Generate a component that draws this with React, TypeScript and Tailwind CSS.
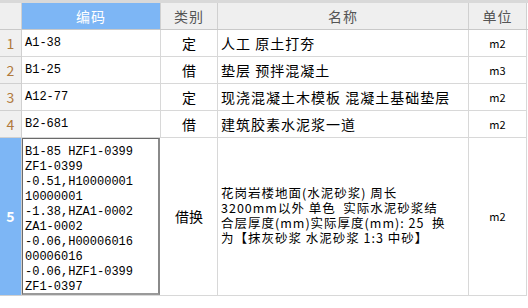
import React from "react";

const cjk = { fontFamily: '"Noto Sans CJK SC", "Noto Sans", sans-serif' };
const mono = { fontFamily: '"Liberation Mono", "Noto Sans CJK SC", monospace' };

const rows = [
  { n: "1", code: "A1-38", type: "定", name: "人工 原土打夯", unit: "m2" },
  { n: "2", code: "B1-25", type: "借", name: "垫层 预拌混凝土", unit: "m3" },
  { n: "3", code: "A12-77", type: "定", name: "现浇混凝土木模板 混凝土基础垫层", unit: "m2" },
  { n: "4", code: "B2-681", type: "借", name: "建筑胶素水泥浆一道", unit: "m2" },
];

const codeLines = [
  "B1-85 HZF1-0399",
  "ZF1-0399",
  "-0.51,H10000001",
  "10000001",
  "-1.38,HZA1-0002",
  "ZA1-0002",
  "-0.06,H00006016",
  "00006016",
  "-0.06,HZF1-0399",
  "ZF1-0397",
];

const nameLines = [
  "花岗岩楼地面(水泥砂浆) 周长",
  "3200mm以外 单色  实际水泥砂浆结",
  "合层厚度(mm)实际厚度(mm): 25  换",
  "为【抹灰砂浆 水泥砂浆 1:3 中砂】",
];

export default function App() {
  return (
    <div className="w-[528px] h-[308px] bg-white overflow-hidden" style={cjk}>
      <div className="h-[3px] w-[528px] bg-[#d9d9d9]" />
      {/* header */}
      <div className="flex h-[27px] w-[528px] border-b border-[#c9c9c9] bg-white">
        <div className="w-[22px] shrink-0 bg-[#efefef] border-r border-[#d0d0d0]" />
        <div className="w-[139px] shrink-0 bg-[#7db6f5] border-r border-[#d0d0d0] flex items-center justify-center text-white text-[14px] tracking-[1px]">
          编码
        </div>
        <div className="w-[57px] shrink-0 bg-[#efefef] border-r border-[#d0d0d0] flex items-center justify-center text-[#555] text-[14px] tracking-[1px]">
          类别
        </div>
        <div className="w-[251px] shrink-0 bg-[#efefef] border-r border-[#d0d0d0] flex items-center justify-center text-[#555] text-[14px] tracking-[1px]">
          名称
        </div>
        <div className="w-[58px] shrink-0 bg-[#efefef] border-r border-[#d0d0d0] flex items-center justify-center text-[#555] text-[14px] tracking-[1px]">
          单位
        </div>
      </div>
      {rows.map((r) => (
        <div key={r.n} className="flex h-[27px] w-[528px]">
          <div className="w-[22px] shrink-0 bg-[#f0f0f0] border-r border-b border-[#d0d0d0] flex items-center justify-center text-[#b07a3c] text-[14px]">
            {r.n}
          </div>
          <div className="w-[139px] shrink-0 border-r border-b border-[#d8d8d8] flex items-center pl-[3px] text-[12px] text-black" style={mono}>
            {r.code}
          </div>
          <div className="w-[57px] shrink-0 border-r border-b border-[#d8d8d8] flex items-center justify-center text-[14px] text-black">
            {r.type}
          </div>
          <div className="w-[251px] shrink-0 border-r border-b border-[#d8d8d8] flex items-center pl-[3px] text-[14px] tracking-[1px] text-black whitespace-nowrap">
            {r.name}
          </div>
          <div className="w-[58px] shrink-0 border-r border-b border-[#d8d8d8] flex items-center justify-center text-[11px] text-black">
            {r.unit}
          </div>
        </div>
      ))}
      {/* row 5 */}
      <div className="flex h-[158px] w-[528px]">
        <div className="w-[22px] shrink-0 bg-[#7db6f5] border-r border-b border-[#d0d0d0] flex items-center justify-center text-white font-bold text-[14px]">
          5
        </div>
        <div className="w-[139px] shrink-0 border-b border-[#d8d8d8] bg-white">
          <div className="h-full w-[138px] border border-[#6a6a6a] border-r-2 border-r-[#8a8a8a] border-b-2 border-b-[#9a9a9a] pl-[2px] pt-[6px] text-[12px] leading-[15px] text-black" style={mono}>
            {codeLines.map((l, i) => (
              <div key={i} className="whitespace-pre">{l}</div>
            ))}
          </div>
        </div>
        <div className="w-[57px] shrink-0 border-r border-b border-[#d8d8d8] flex items-center justify-center text-[14px] text-black">
          借换
        </div>
        <div className="w-[251px] shrink-0 border-r border-b border-[#d8d8d8] flex flex-col justify-center pl-[3px] pb-[4px] text-[12.5px] leading-[15px] tracking-[1px] text-black">
          {nameLines.map((l, i) => (
            <div key={i} className="whitespace-pre">{l}</div>
          ))}
        </div>
        <div className="w-[58px] shrink-0 border-r border-b border-[#d8d8d8] flex items-center justify-center text-[11px] text-black">
          m2
        </div>
      </div>
    </div>
  );
}
